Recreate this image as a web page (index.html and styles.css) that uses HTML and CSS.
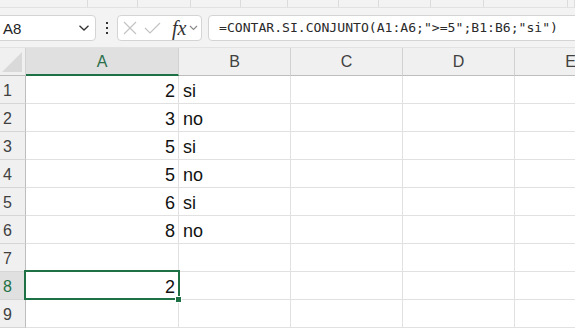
FILE: index.html
```html
<!DOCTYPE html>
<html lang="es">
<head>
  <meta charset="UTF-8">
  <title>CONTAR.SI.CONJUNTO</title>
  <link rel="stylesheet" href="styles.css">
</head>
<body>

<div class="ribbon">
  <span></span><span></span><span></span><span></span><span></span>
  <span></span><span></span><span></span><span></span><span></span><span></span>
</div>

<div class="fbar">
  <div class="namebox">
    <span>A8</span>
    <svg width="12" height="8" viewBox="0 0 12 8"><path d="M1.5 1.8 L6 6 L10.5 1.8" fill="none" stroke="#333" stroke-width="1.3"/></svg>
  </div>
  <div class="dots"><i></i><i></i><i></i></div>
  <div class="fxbox">
    <svg width="14" height="14" viewBox="0 0 14 14"><path d="M1 1 L13 13 M13 1 L1 13" stroke="#c3c3c3" stroke-width="1.2"/></svg>
    <svg width="17" height="12" viewBox="0 0 17 12"><path d="M1 6 L6 11 L16 1" fill="none" stroke="#c3c3c3" stroke-width="1.2"/></svg>
    <span class="fx">fx</span>
    <svg width="9" height="6" viewBox="0 0 9 6"><path d="M1 1 L4.5 4.5 L8 1" fill="none" stroke="#888" stroke-width="1.1"/></svg>
  </div>
  <div class="formula">=CONTAR.SI.CONJUNTO(A1:A6;"&gt;=5";B1:B6;"si")</div>
</div>

<div class="sheet">
  <div class="hd corner"><svg width="26" height="27" viewBox="0 0 26 27"><path d="M2 24 L22 24 L22 4 Z" fill="#d9d9d9"/></svg></div>
  <div class="hd col on">A</div><div class="hd col">B</div><div class="hd col">C</div><div class="hd col">D</div><div class="hd col">E</div>

  <div class="rh">1</div><div class="c num">2</div><div class="c">si</div><div class="c"></div><div class="c"></div><div class="c"></div>
  <div class="rh">2</div><div class="c num">3</div><div class="c">no</div><div class="c"></div><div class="c"></div><div class="c"></div>
  <div class="rh">3</div><div class="c num">5</div><div class="c">si</div><div class="c"></div><div class="c"></div><div class="c"></div>
  <div class="rh">4</div><div class="c num">5</div><div class="c">no</div><div class="c"></div><div class="c"></div><div class="c"></div>
  <div class="rh">5</div><div class="c num">6</div><div class="c">si</div><div class="c"></div><div class="c"></div><div class="c"></div>
  <div class="rh">6</div><div class="c num">8</div><div class="c">no</div><div class="c"></div><div class="c"></div><div class="c"></div>
  <div class="rh">7</div><div class="c"></div><div class="c"></div><div class="c"></div><div class="c"></div><div class="c"></div>
  <div class="rh on">8</div><div class="c num sel">2</div><div class="c"></div><div class="c"></div><div class="c"></div><div class="c"></div>
  <div class="rh">9</div><div class="c"></div><div class="c"></div><div class="c"></div><div class="c"></div><div class="c"></div>
</div>

</body>
</html>
```

FILE: styles.css
```css
body {
  margin: 0;
  background: #fff;
  overflow: hidden;
  font-family: 'Liberation Sans', Arial, sans-serif;
  color: #222;
}
.ribbon {
  display: grid;
  grid-template-columns: 88px 50px 53px 50px 47px 51px 40px 52px 53px 84px 1fr;
  height: 7px;
  background: #f3f3f3;
  border-bottom: 1px solid #e2e2e2;
}
.ribbon span {
  border-right: 1px solid #dcdcdc;
}
.fbar {
  display: flex;
  align-items: flex-start;
  height: 39px;
  background: #f3f3f3;
  border-bottom: 1px solid #e2e2e2;
  overflow: hidden;
}
.namebox, .fxbox, .formula {
  margin-top: 7px;
  height: 26px;
  box-sizing: border-box;
  background: #fff;
  border: 1px solid #d4d4d4;
  border-radius: 4px;
}
.namebox {
  margin-left: -5px;
  width: 101px;
  flex-shrink: 0;
  display: flex;
  align-items: center;
  justify-content: space-between;
  padding: 0 5px 0 7px;
  font-size: 15px;
}
.dots {
  width: 21px;
  flex-shrink: 0;
  height: 40px;
  display: flex;
  flex-direction: column;
  align-items: center;
  justify-content: center;
  gap: 3px;
}
.dots i {
  width: 2px;
  height: 2px;
  background: #333;
}
.fxbox {
  width: 85px;
  flex-shrink: 0;
  display: flex;
  align-items: center;
  padding-left: 5px;
  gap: 8px;
}
.fxbox svg:nth-of-type(2) {
  margin-left: -1px;
}
.fx {
  font-family: 'Liberation Serif', serif;
  font-style: italic;
  font-size: 20px;
  color: #333;
  margin-left: 3px;
  margin-right: -5px;
}
.formula {
  margin-left: 6px;
  flex-shrink: 0;
  width: 400px;
  padding-left: 10px;
  font-family: 'DejaVu Sans Mono', monospace;
  font-size: 13.1px;
  line-height: 24px;
  color: #2a2a2a;
  white-space: nowrap;
}
.sheet {
  display: grid;
  grid-template-columns: 26px 153px 112px 112px 112px 112px;
  grid-auto-rows: 28px;
  width: 627px;
}
.sheet > div {
  box-sizing: border-box;
  border-right: 1px solid #e1e1e1;
  border-bottom: 1px solid #e1e1e1;
}
.sheet > .hd {
  background: #f0f0f0;
  border-right: 1px solid #d2d2d2;
  border-bottom: 1px solid #bdbdbd;
}
.corner svg {
  display: block;
}
.col {
  display: flex;
  align-items: center;
  justify-content: center;
  font-size: 16px;
  color: #404040;
  padding-top: 1px;
}
.sheet > .col.on {
  background: #e0e0e0;
  color: #2b6e4a;
  border-bottom: 2px solid #1e7145;
}
.sheet > .rh {
  background: #f0f0f0;
  border-right: 1px solid #bdbdbd;
  border-bottom: 1px solid #d6d6d6;
  font-size: 16px;
  color: #404040;
  display: flex;
  align-items: flex-end;
  padding: 0 0 4px 3px;
  line-height: 16px;
}
.sheet > .rh.on {
  background: #e0e0e0;
  color: #1e7145;
}
.c {
  display: flex;
  align-items: flex-end;
  padding: 0 3px 3px 4px;
  font-size: 18px;
  line-height: 18px;
  color: #111;
}
.num {
  justify-content: flex-end;
}
.sel {
  position: relative;
}
.sel::after {
  content: "";
  position: absolute;
  left: -2px;
  top: -2px;
  right: -2px;
  bottom: -1px;
  border: 2px solid #1e7145;
}
.sel::before {
  content: "";
  position: absolute;
  right: -4px;
  bottom: -4px;
  width: 5px;
  height: 5px;
  background: #1e7145;
  border: 1px solid #fff;
  z-index: 1;
}
```
